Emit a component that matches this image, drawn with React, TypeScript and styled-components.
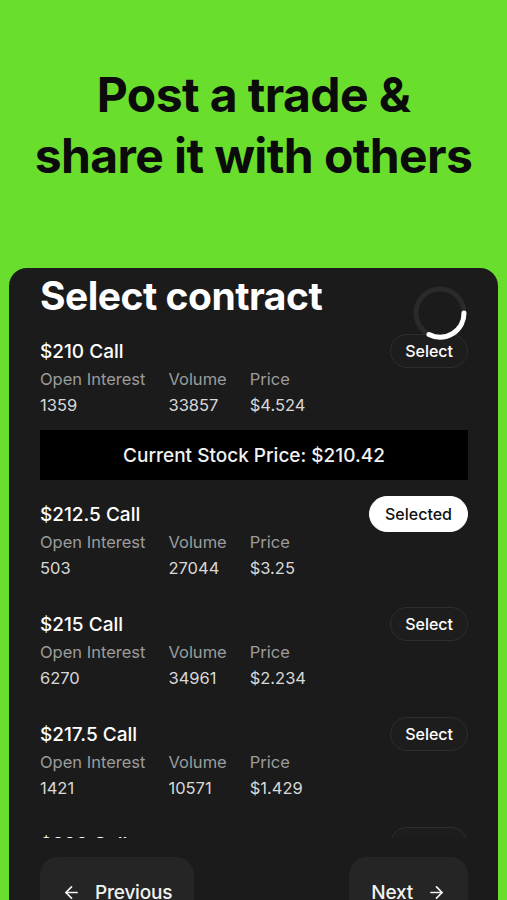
import React from 'react';
import styled, { createGlobalStyle } from 'styled-components';
import { ArrowLeft, ArrowRight } from 'lucide-react';

const GlobalStyle = createGlobalStyle`
  html, body {
    margin: 0;
    padding: 0;
    background: #6ade2c;
  }
  * {
    box-sizing: border-box;
  }
`;

interface Contract {
  strike: string;
  openInterest: string;
  volume: string;
  price: string;
  selected?: boolean;
}

const contracts: Array<Contract> = [
  { strike: '$210', openInterest: '1359', volume: '33857', price: '$4.524' },
  { strike: '$212.5', openInterest: '503', volume: '27044', price: '$3.25', selected: true },
  { strike: '$215', openInterest: '6270', volume: '34961', price: '$2.234' },
  { strike: '$217.5', openInterest: '1421', volume: '10571', price: '$1.429' },
  { strike: '$220', openInterest: '2210', volume: '9812', price: '$0.982' },
];

const App: React.FC = () => {
  return (
    <Page>
      <GlobalStyle />
      <Hero>
        <Headline>
          Post a trade &amp;
          <br />
          share it with others
        </Headline>
      </Hero>
      <Card>
        <Spinner viewBox="0 0 56 56">
          <circle cx="28" cy="28" r="24" fill="none" stroke="#2a2a2a" strokeWidth="5" />
          <path d="M52 28 A24 24 0 0 1 17 49.5" fill="none" stroke="#ffffff" strokeWidth="5" strokeLinecap="round" />
        </Spinner>
        <Title>Select contract</Title>
        <List>
          {contracts.map((item, key) => {
            return (
              <React.Fragment key={key}>
                <Row $space={key === 0 ? 21 : key === 1 ? 22 : 32}>
                  <TopLine>
                    <Strike>{item.strike} Call</Strike>
                    <PickButton $active={!!item.selected}>
                      {item.selected ? 'Selected' : 'Select'}
                    </PickButton>
                  </TopLine>
                  <Stats>
                    <Stat>
                      <Label>Open Interest</Label>
                      <Value>{item.openInterest}</Value>
                    </Stat>
                    <Stat>
                      <Label>Volume</Label>
                      <Value>{item.volume}</Value>
                    </Stat>
                    <Stat>
                      <Label>Price</Label>
                      <Value>{item.price}</Value>
                    </Stat>
                  </Stats>
                </Row>
                {key === 0 && <StockBar>Current Stock Price: $210.42</StockBar>}
              </React.Fragment>
            );
          })}
        </List>
        <Footer>
          <NavButton>
            <ArrowLeft size={19} strokeWidth={2.2} />
            Previous
          </NavButton>
          <NavButton>
            Next
            <ArrowRight size={19} strokeWidth={2.2} />
          </NavButton>
        </Footer>
      </Card>
    </Page>
  );
};

export default App;

const Page = styled.div`
  width: 507px;
  height: 900px;
  overflow: hidden;
  display: flex;
  flex-direction: column;
  background: #6ade2c;
  font-family: Inter, 'Liberation Sans', sans-serif;
`;

const Hero = styled.div`
  height: 268px;
  flex: none;
  padding-top: 64px;
  display: flex;
  justify-content: center;
`;

const Headline = styled.h1`
  margin: 0;
  font-size: 48px;
  line-height: 61px;
  font-weight: 700;
  letter-spacing: -0.6px;
  color: #0b0b0b;
  text-align: center;
  white-space: nowrap;
`;

const Card = styled.div`
  position: relative;
  flex: 1;
  min-height: 0;
  margin: 0 9px;
  padding: 6px 30px 0 31px;
  background: #1b1b1b;
  border-radius: 18px 18px 0 0;
  display: flex;
  flex-direction: column;
`;

const Spinner = styled.svg`
  position: absolute;
  left: 403px;
  top: 17px;
  width: 56px;
  height: 56px;
  z-index: 2;
`;

const Title = styled.h2`
  margin: 0;
  font-size: 39px;
  line-height: 44px;
  font-weight: 700;
  letter-spacing: -0.5px;
  color: #ffffff;
`;

const List = styled.div`
  flex: 1;
  min-height: 0;
  overflow: hidden;
  display: flex;
  flex-direction: column;
`;

const Row = styled.div<{ $space: number }>`
  flex: none;
  padding-top: ${p => p.$space}px;
  display: flex;
  flex-direction: column;
`;

const TopLine = styled.div`
  height: 24px;
  display: flex;
  align-items: center;
  justify-content: space-between;
  margin-bottom: 4px;
`;

const Strike = styled.div`
  font-size: 19px;
  font-weight: 500;
  color: #ffffff;
`;

const PickButton = styled.div<{ $active: boolean }>`
  height: ${p => (p.$active ? 36 : 34)}px;
  padding: 0 ${p => (p.$active ? 15 : 14)}px;
  border-radius: 18px;
  display: flex;
  align-items: center;
  font-size: 16px;
  font-weight: 500;
  color: ${p => (p.$active ? '#111111' : '#ffffff')};
  background: ${p => (p.$active ? '#ffffff' : '#1d1d1d')};
  border: 1px solid ${p => (p.$active ? '#ffffff' : '#2e2e2e')};
`;

const Stats = styled.div`
  display: flex;
  gap: 23px;
`;

const Stat = styled.div`
  display: flex;
  flex-direction: column;
  gap: 2px;
`;

const Label = styled.div`
  font-size: 16.5px;
  line-height: 24px;
  color: #9c9c9c;
`;

const Value = styled.div`
  font-size: 16.5px;
  line-height: 24px;
  color: #d8d8d8;
`;

const StockBar = styled.div`
  flex: none;
  margin-top: 13px;
  height: 50px;
  background: #000000;
  display: flex;
  align-items: center;
  justify-content: center;
  font-size: 19px;
  font-weight: 500;
  color: #f2f2f2;
`;

const Footer = styled.div`
  flex: none;
  height: 62px;
  padding-top: 19px;
  display: flex;
  justify-content: space-between;
  align-items: flex-start;
`;

const NavButton = styled.div`
  flex: none;
  height: 68px;
  padding: 2px 22px 0;
  border-radius: 18px;
  background: #252525;
  display: flex;
  align-items: center;
  gap: 14px;
  font-size: 19px;
  font-weight: 500;
  color: #f2f2f2;
  letter-spacing: -0.2px;
`;
